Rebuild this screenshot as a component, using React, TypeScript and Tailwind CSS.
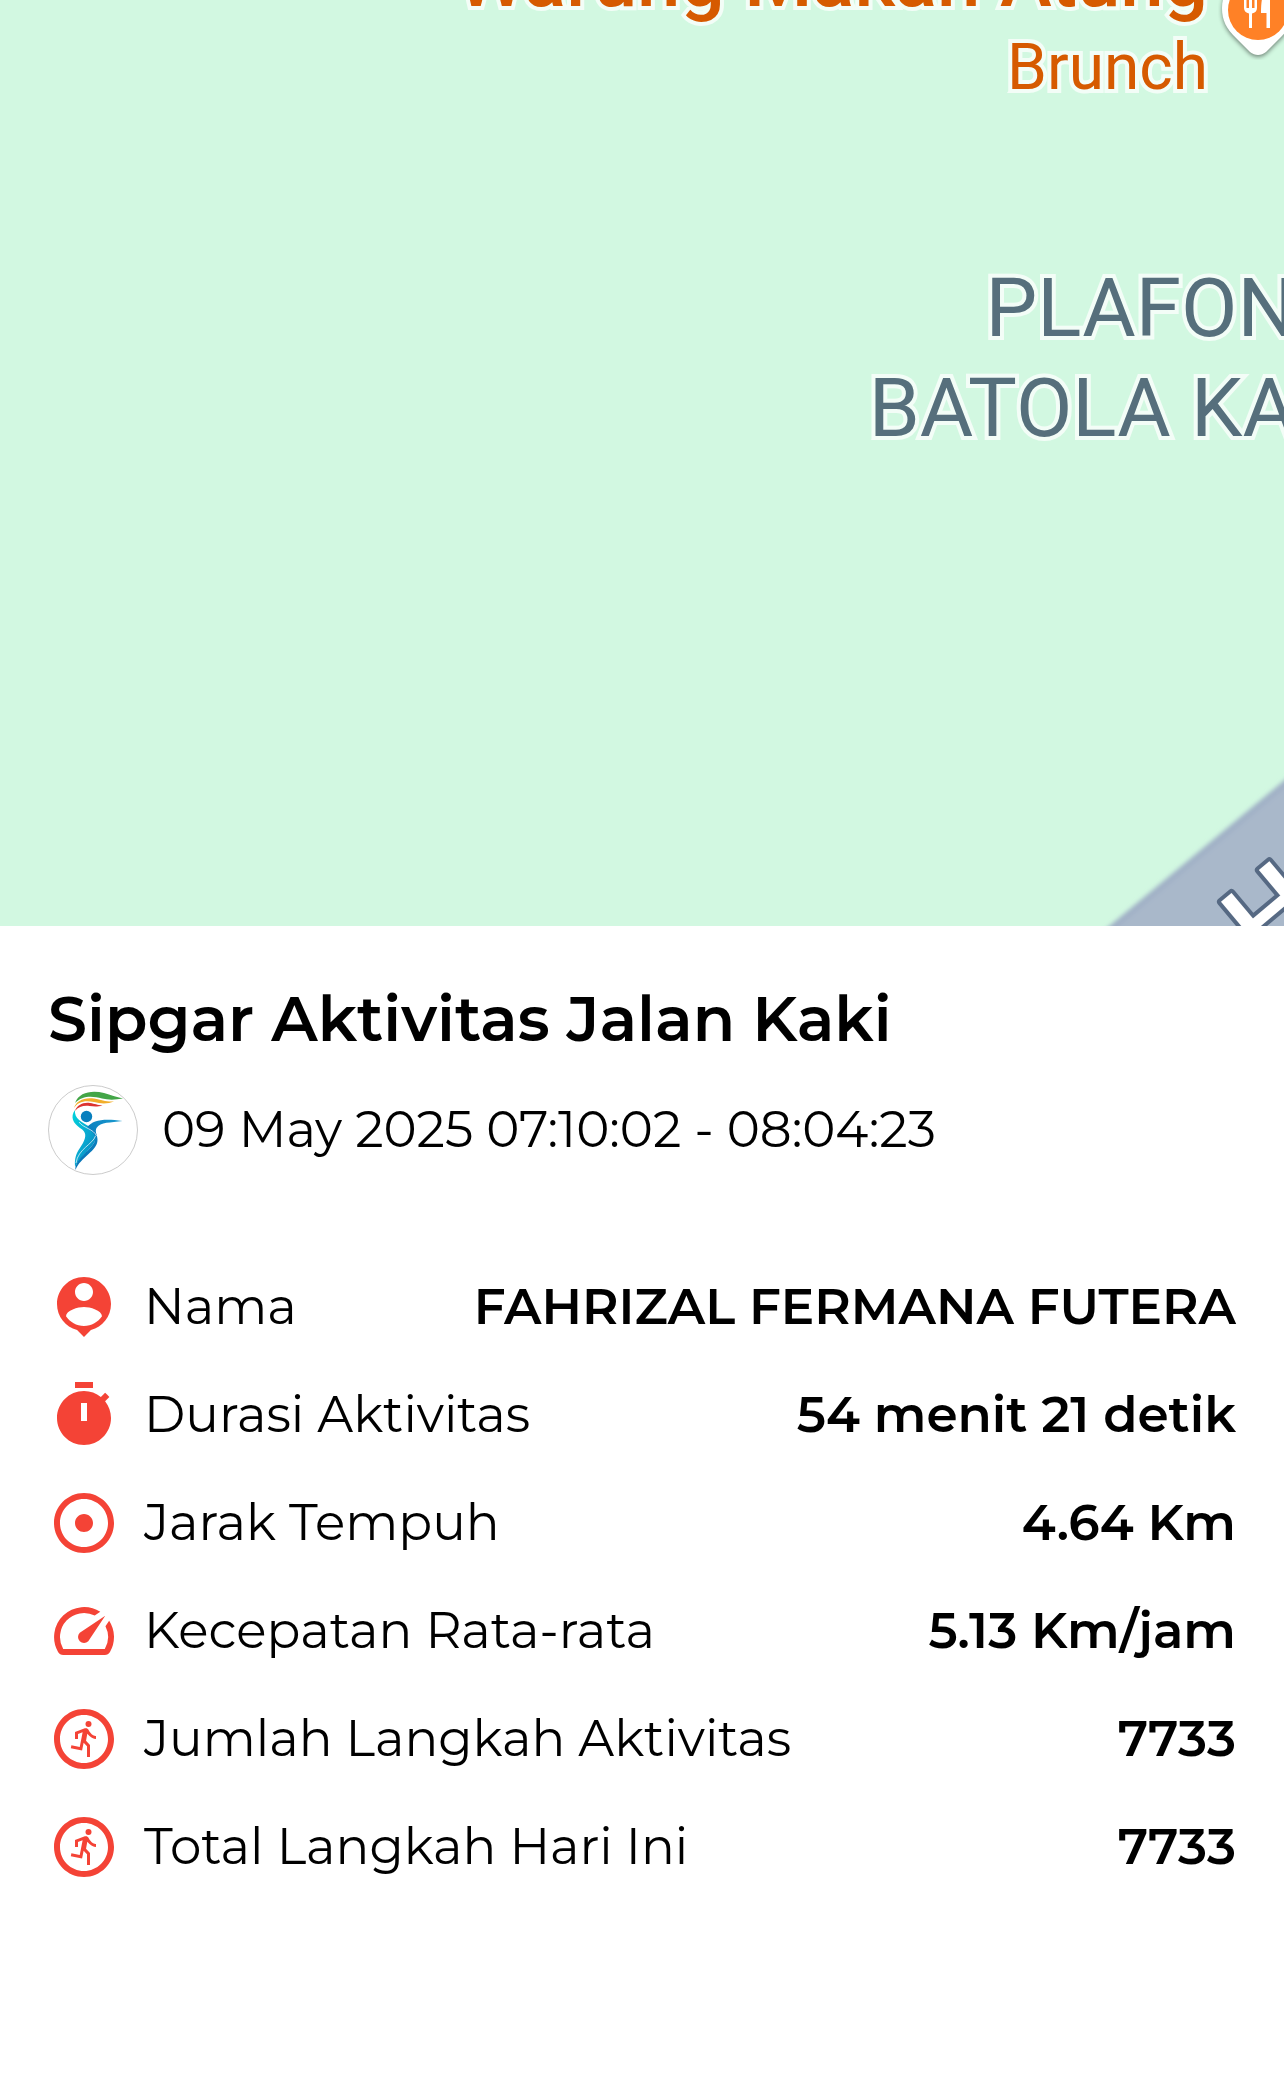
import type { ReactNode } from "react";
import { MdAdjust, MdOutlineRunCircle, MdSpeed } from "react-icons/md";

function PersonPinIcon() {
  return (
    <svg viewBox="0 0 24 24" className="size-full" fill="currentColor" aria-hidden="true">
      <path d="M12 2c-4.97 0-9 4.03-9 9 0 4.17 2.84 7.67 6.69 8.69L12 22l2.31-2.31C18.16 18.67 21 15.17 21 11c0-4.97-4.03-9-9-9zm0 2c1.66 0 3 1.34 3 3s-1.34 3-3 3-3-1.34-3-3 1.34-3 3-3zm0 14.3c-2.5 0-4.71-1.28-6-3.22.03-1.99 4-3.08 6-3.08 1.99 0 5.97 1.09 6 3.08-1.29 1.94-3.5 3.22-6 3.22z" />
    </svg>
  );
}

function TimerIcon() {
  return (
    <svg viewBox="0 0 24 24" className="size-full" fill="currentColor" aria-hidden="true">
      <path d="M9 1h6v2H9zM19.03 7.39l1.42-1.42c-.45-.51-.9-.97-1.41-1.41l-1.42 1.42C16.07 4.74 14.12 4 12 4c-4.97 0-9 4.03-9 9s4.02 9 9 9 9-4.03 9-9c0-2.12-.74-4.07-1.97-5.61zM13 14h-2V8h2v6z" />
    </svg>
  );
}

function Logo() {
  return (
    <svg viewBox="0 0 90 90" className="size-[90px] shrink-0" role="img" aria-label="Sipgar">
      <defs>
        <linearGradient id="body" x1="0" y1="0" x2="1" y2="1">
          <stop offset="0" stopColor="#00d4dc" />
          <stop offset="0.55" stopColor="#0aa5cf" />
          <stop offset="1" stopColor="#0779b9" />
        </linearGradient>
        <linearGradient id="arm" x1="1" y1="0" x2="0" y2="1">
          <stop offset="0" stopColor="#1a9bd0" />
          <stop offset="0.5" stopColor="#0a7dbd" />
          <stop offset="1" stopColor="#0874b6" />
        </linearGradient>
      </defs>
      <circle cx="45" cy="45" r="44.5" fill="#fff" stroke="#b4b4b4" strokeWidth="0.7" />
      <path d="M27 18C31 7 44 5 56 8c7 2 12 4 19 5.500-8 1.500-15 1.500-21 0-10-3-20-3-27 4.500z" fill="#43a547" />
      <path d="M26 23c2-7 10-11 20-9.500 8 1.500 12 3.500 20 3-6 2.500-13 2.500-20 .5-9-2-16-.5-20 6z" fill="#f2ae2a" />
      <path d="M27 26c2-6 8-9 15-8 5 .7 7 2.200 12.500 2.200-5 2-9 1.300-13 .8-6-.6-11 .5-14.500 5z" fill="#dc3330" />
      <circle cx="38.500" cy="31.500" r="5.700" fill="#087fbe" />
      <path d="M27 25c-5 7-2 13 5 18 7 4 6 9 3 15-4 7-9 11-8 24 4-9 13-15 19-24 5-8 2-12-4-16C34 37 26 34 27 25z" fill="url(#body)" />
      <path d="M39 42c6-7 17-9 35.500-6-12 2-22 .5-26 7-2 4 1 7 1 12 0 11-17 17-22 30-1-11 14-18 19-28 3-7-3-10-7.500-15z" fill="url(#arm)" />
      <path d="M28 78c2-14 17-19 19.500-27" fill="none" stroke="#fff" strokeWidth="0.7" />
      <path d="M31 37c4 6 15 7 17.500 14" fill="none" stroke="#fff" strokeWidth="0.7" />
    </svg>
  );
}

function FoodPin() {
  return (
    <svg viewBox="0 0 80 100" className="absolute -top-10 left-[1218px] h-[100px] w-[80px]" aria-hidden="true">
      <g className="drop-shadow-[0_2px_2px_rgba(0,0,0,0.45)]">
        <path d="M40 12C20 12 4 28 4 48c0 13 5 21 13 29l15 15c5 4 11 4 16 0l15-15c8-8 13-16 13-29 0-20-16-36-36-36z" fill="#fff" />
      </g>
      <circle cx="40" cy="50" r="30" fill="#ff8126" />
      <path d="M26 30v18c0 3 2 5 5 5.500V68h3V53.500c3-.5 5-2.500 5-5.500V30h-2.500v18h-2.500V30h-3v18h-2.500V30zM50 30c-5 2-7 8-7 23h5.500v15h3.500V30z" fill="#fff" />
    </svg>
  );
}

function MapView() {
  return (
    <section className="relative h-[926px] overflow-hidden bg-[#d2f8e1]" aria-label="Peta">
      <svg className="absolute bottom-0 left-[1084px] h-[180px] w-[400px] overflow-hidden" viewBox="0 0 400 180" aria-hidden="true">
        <defs>
          <filter id="edge" x="-10%" y="-10%" width="120%" height="120%">
            <feGaussianBlur stdDeviation="2" />
          </filter>
        </defs>
        <path d="M6 200L424-148v400H-60z" fill="#a9b8ca" stroke="#a0b0c6" strokeWidth="6" filter="url(#edge)" />
        <text
          x="182"
          y="222"
          transform="rotate(-40 182 222)"
          className="fill-white stroke-[#566983] font-['Roboto'] text-[112px] font-medium"
          strokeWidth="8"
          strokeLinejoin="round"
          paintOrder="stroke"
        >
          H
        </text>
      </svg>
      <div className="absolute -top-16 left-[408px] w-[800px] text-right font-['Roboto',sans-serif] leading-[88px] whitespace-nowrap text-[#d65a00] [-webkit-text-stroke:8px_#f3fdf7] [paint-order:stroke_fill]">
        <p className="text-[78px] font-medium">Warung Makan Atung</p>
        <p className="text-[64px]">Brunch</p>
      </div>
      <div className="absolute top-[258px] left-[858px] w-[438px] text-right font-['Roboto',sans-serif] text-[82px] leading-[100px] whitespace-nowrap text-[#566f7c] [-webkit-text-stroke:8px_#f3fdf7] [paint-order:stroke_fill]">
        <p>PLAFON</p>
        <p>BATOLA KA</p>
      </div>
      <FoodPin />
    </section>
  );
}

interface Stat {
  label: string;
  value: string;
  icon: ReactNode;
}

const stats: Stat[] = [
  { label: "Nama", value: "FAHRIZAL FERMANA FUTERA", icon: <PersonPinIcon /> },
  { label: "Durasi Aktivitas", value: "54 menit 21 detik", icon: <TimerIcon /> },
  { label: "Jarak Tempuh", value: "4.64 Km", icon: <MdAdjust className="size-full" /> },
  { label: "Kecepatan Rata-rata", value: "5.13 Km/jam", icon: <MdSpeed className="size-full" /> },
  { label: "Jumlah Langkah Aktivitas", value: "7733", icon: <MdOutlineRunCircle className="size-full" /> },
  { label: "Total Langkah Hari Ini", value: "7733", icon: <MdOutlineRunCircle className="size-full" /> },
];

export default function App() {
  return (
    <main className="min-h-screen bg-white font-['Montserrat','Inter',sans-serif] text-black">
      <MapView />

      <section className="px-12 pt-14 pb-12">
        <h1 className="text-[62px] leading-[74px] font-semibold">Sipgar Aktivitas Jalan Kaki</h1>
        <div className="mt-[29px] flex items-center gap-6">
          <Logo />
          <time className="text-[50px] leading-[60px]">09 May 2025 07:10:02 - 08:04:23</time>
        </div>

        <dl className="mt-[78px]">
          {stats.map((s) => (
            <div key={s.label} className="flex h-[108px] items-center justify-between whitespace-nowrap">
              <dt className="flex items-center gap-6 text-[50px] leading-[60px]">
                <span className="size-[72px] shrink-0 text-[#f44336]">{s.icon}</span>
                {s.label}
              </dt>
              <dd className="text-[50px] leading-[60px] font-semibold">{s.value}</dd>
            </div>
          ))}
        </dl>
      </section>
    </main>
  );
}
